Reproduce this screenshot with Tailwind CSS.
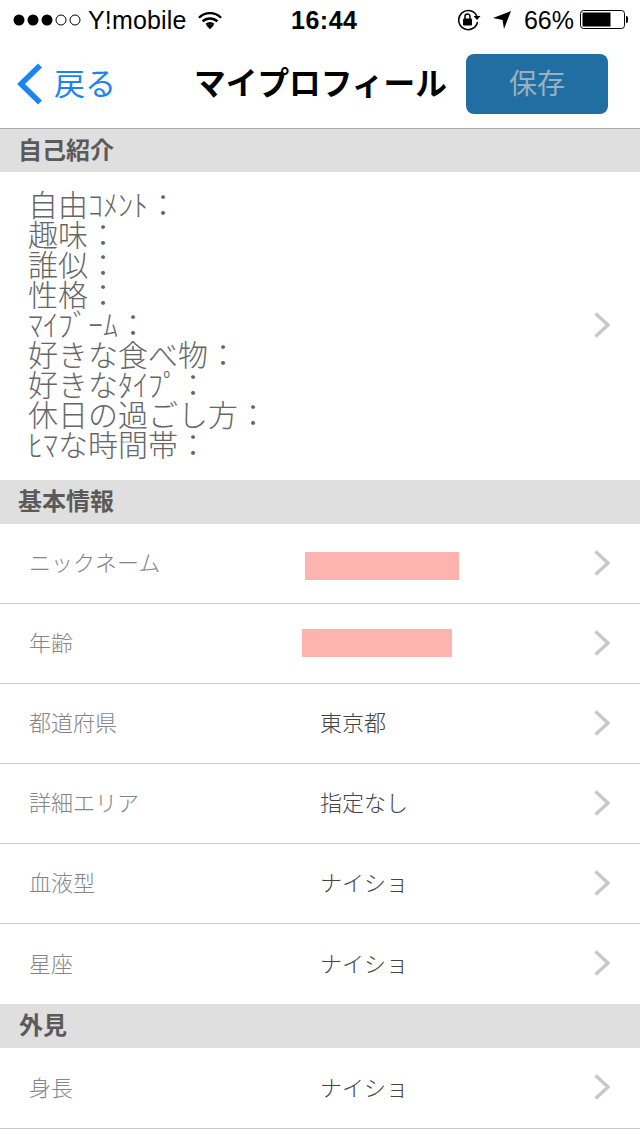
<!DOCTYPE html>
<html lang="ja">
<head>
<meta charset="utf-8">
<script src="https://cdn.jsdelivr.net/npm/@tailwindcss/browser@4"></script>
</head>
<body class="bg-white">
<div class="w-[640px] h-[1136px] overflow-hidden bg-white font-['Liberation_Sans','Noto_Sans_CJK_JP',sans-serif]">
  <!-- status bar -->
  <div class="h-10 flex items-center justify-between text-black relative">
    <div class="flex items-center pl-[13px] gap-[7px]">
      <svg width="68" height="14" viewBox="0 0 68 14"><g fill="#000"><circle cx="6" cy="7" r="5.5"/><circle cx="20" cy="7" r="5.5"/><circle cx="34" cy="7" r="5.5"/></g><g fill="none" stroke="#000" stroke-width="1"><circle cx="48" cy="7" r="5"/><circle cx="62" cy="7" r="5"/></g></svg>
      <span class="text-[25px] leading-none tracking-[0.15px]">Y!mobile</span>
      <svg class="ml-[5px]" width="24" height="19" viewBox="0 0 26 20"><path d="M1 7a17 17 0 0 1 24 0M5 11a11.500 11.500 0 0 1 16 0M9 14.500a6 6 0 0 1 8 0" fill="none" stroke="#000" stroke-width="2.600"/><path d="M13 19.500l-4-4a6 6 0 0 1 8 0z" fill="#000"/></svg>
    </div>
    <span class="absolute left-[291px] top-[6px] text-[25px] leading-[28px] font-bold tracking-[0.5px]">16:44</span>
    <div class="flex items-center">
      <svg width="24" height="22" viewBox="0 0 24 22" class="mr-[11px]"><path d="M20 7.500A9.500 9.500 0 1 0 20.500 13" fill="none" stroke="#000" stroke-width="1.500"/><path d="M16.500 7h7l-3.500 4z" fill="#000"/><rect x="6" y="9.500" width="9" height="7" rx="1" fill="#000"/><path d="M8 10V7.500a2.500 2.500 0 0 1 5 0V10" fill="none" stroke="#000" stroke-width="1.500"/></svg>
      <svg width="20" height="20" viewBox="0 0 20 20" class="mr-[12px]"><path d="M19 1L12 19l-1.500-9L1 8z" fill="#000"/></svg>
      <span class="text-[25px] leading-none mr-[6px]">66%</span>
      <svg width="48" height="20" viewBox="0 0 48 20" class="mr-[12px]"><rect x="0.500" y="0.500" width="44" height="18" rx="3" fill="#fff" stroke="#000"/><rect x="2.500" y="2.500" width="28" height="14" fill="#000"/><path d="M46 6c2 0 2 1 2 3.500s0 3.500-2 3.500z" fill="#000"/></svg>
    </div>
  </div>
  <!-- nav -->
  <div class="h-[89px] relative border-b border-[#a8a8a8] flex items-center justify-between">
    <div class="flex items-center pl-[17px] gap-[11px] text-[#1b84f5]">
      <svg width="26" height="42" viewBox="0 0 26 42"><path d="M23 2.500L4 21l19 18.500" fill="none" stroke="#1b84f5" stroke-width="5.500"/></svg>
      <span class="text-[31px] leading-none">戻る</span>
    </div>
    <span class="absolute left-[194px] top-[24px] text-[31.700px] leading-[40px] font-bold text-black">マイプロフィール</span>
    <div class="w-[142px] h-[60px] mr-[32px] rounded-[8px] bg-[#216fa2] text-[#9ab0bf] text-[28px] flex items-center justify-center"><span class="mt-[2px]">保存</span></div>
  </div>
  <!-- 自己紹介 -->
  <div class="h-[43px] bg-[#dfdfdf] pl-[18px] flex items-center text-[24px] font-bold text-[#5a5a5a]">自己紹介</div>
  <div class="h-[308px] flex items-center justify-between pl-[28px] pr-[30px]">
    <div class="text-[30px] leading-[30px] text-[#666] font-light">
      <div>自由ｺﾒﾝﾄ：</div>
      <div>趣味：</div>
      <div>誰似：</div>
      <div>性格：</div>
      <div>ﾏｲﾌﾞｰﾑ：</div>
      <div>好きな食べ物：</div>
      <div>好きなﾀｲﾌﾟ：</div>
      <div>休日の過ごし方：</div>
      <div>ﾋﾏな時間帯：</div>
    </div>
    <svg class="mb-[2px]" width="16" height="26" viewBox="0 0 16 26"><path d="M1.500 1.500L14 13 1.500 24.500" fill="none" stroke="#c7c7cc" stroke-width="3.400"/></svg>
  </div>
  <!-- 基本情報 -->
  <div class="h-[44px] bg-[#dfdfdf] pl-[18px] flex items-center text-[24px] font-bold text-[#5a5a5a]">基本情報</div>
  <div class="h-[80px] border-b border-[#c8c8c8] flex items-center justify-between pl-[29px] pr-[30px] relative">
    <span class="text-[22px] text-[#858585] font-light">ニックネーム</span>
    <div class="absolute left-[305px] top-[28px] w-[154px] h-[28px] bg-[#ffb3b0]"></div>
    <svg class="mb-[2px]" width="16" height="26" viewBox="0 0 16 26"><path d="M1.500 1.500L14 13 1.500 24.500" fill="none" stroke="#c7c7cc" stroke-width="3.400"/></svg>
  </div>
  <div class="h-[80px] border-b border-[#c8c8c8] flex items-center justify-between pl-[29px] pr-[30px] relative">
    <span class="text-[22px] text-[#858585] font-light">年齢</span>
    <div class="absolute left-[302px] top-[25px] w-[150px] h-[28px] bg-[#ffb3b0]"></div>
    <svg class="mb-[2px]" width="16" height="26" viewBox="0 0 16 26"><path d="M1.500 1.500L14 13 1.500 24.500" fill="none" stroke="#c7c7cc" stroke-width="3.400"/></svg>
  </div>
  <div class="h-[80px] border-b border-[#c8c8c8] flex items-center pl-[29px] pr-[30px]">
    <span class="text-[22px] text-[#858585] font-light w-[291px]">都道府県</span>
    <span class="text-[22px] text-[#444] font-light flex-1">東京都</span>
    <svg class="mb-[2px]" width="16" height="26" viewBox="0 0 16 26"><path d="M1.500 1.500L14 13 1.500 24.500" fill="none" stroke="#c7c7cc" stroke-width="3.400"/></svg>
  </div>
  <div class="h-[80px] border-b border-[#c8c8c8] flex items-center pl-[29px] pr-[30px]">
    <span class="text-[22px] text-[#858585] font-light w-[291px]">詳細エリア</span>
    <span class="text-[22px] text-[#444] font-light flex-1">指定なし</span>
    <svg class="mb-[2px]" width="16" height="26" viewBox="0 0 16 26"><path d="M1.500 1.500L14 13 1.500 24.500" fill="none" stroke="#c7c7cc" stroke-width="3.400"/></svg>
  </div>
  <div class="h-[80px] border-b border-[#c8c8c8] flex items-center pl-[29px] pr-[30px]">
    <span class="text-[22px] text-[#858585] font-light w-[291px]">血液型</span>
    <span class="text-[22px] text-[#444] font-light flex-1">ナイショ</span>
    <svg class="mb-[2px]" width="16" height="26" viewBox="0 0 16 26"><path d="M1.500 1.500L14 13 1.500 24.500" fill="none" stroke="#c7c7cc" stroke-width="3.400"/></svg>
  </div>
  <div class="h-[80px] flex items-center pl-[29px] pr-[30px]">
    <span class="text-[22px] text-[#858585] font-light w-[291px]">星座</span>
    <span class="text-[22px] text-[#444] font-light flex-1">ナイショ</span>
    <svg class="mb-[2px]" width="16" height="26" viewBox="0 0 16 26"><path d="M1.500 1.500L14 13 1.500 24.500" fill="none" stroke="#c7c7cc" stroke-width="3.400"/></svg>
  </div>
  <!-- 外見 -->
  <div class="h-[44px] bg-[#dfdfdf] pl-[19px] flex items-center text-[24px] font-bold text-[#5a5a5a]">外見</div>
  <div class="h-[81px] border-b border-[#c8c8c8] flex items-center pl-[29px] pr-[30px]">
    <span class="text-[22px] text-[#858585] font-light w-[291px]">身長</span>
    <span class="text-[22px] text-[#444] font-light flex-1">ナイショ</span>
    <svg class="mb-[2px]" width="16" height="26" viewBox="0 0 16 26"><path d="M1.500 1.500L14 13 1.500 24.500" fill="none" stroke="#c7c7cc" stroke-width="3.400"/></svg>
  </div>
</div>
</body>
</html>
